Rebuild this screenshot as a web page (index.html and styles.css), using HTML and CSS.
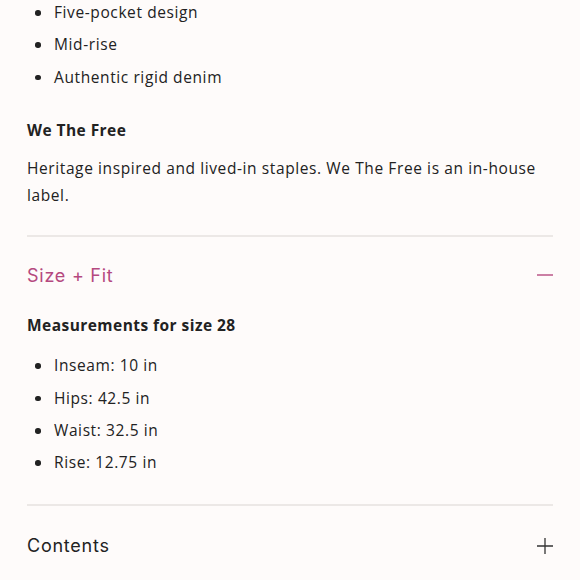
FILE: index.html
```html
<!DOCTYPE html>
<html lang="en">
<head>
<meta charset="utf-8">
<link rel="stylesheet" href="styles.css">
</head>
<body>
<div class="page">
  <section class="panel first">
    <ul class="bullets top">
      <li>Five-pocket design</li>
      <li>Mid-rise</li>
      <li>Authentic rigid denim</li>
    </ul>
    <h3 class="subhead brand">We The Free</h3>
    <p class="para">Heritage inspired and lived-in staples. We The Free is an in-house label.</p>
  </section>
  <section class="panel">
    <div class="acc-head open">
      <span class="acc-title">Size + Fit</span>
      <svg class="acc-icon" width="16" height="16" viewBox="0 0 16 16"><path d="M0 8H16" stroke="#b5497f" stroke-width="1.4"/></svg>
    </div>
    <h3 class="subhead meas">Measurements for size 28</h3>
    <ul class="bullets">
      <li>Inseam: 10 in</li>
      <li>Hips: 42.5 in</li>
      <li>Waist: 32.5 in</li>
      <li>Rise: 12.75 in</li>
    </ul>
  </section>
  <section class="panel">
    <div class="acc-head closed">
      <span class="acc-title">Contents</span>
      <svg class="acc-icon" width="16" height="16" viewBox="0 0 16 16"><path d="M0 8H16M8 0V16" stroke="#333" stroke-width="1.3"/></svg>
    </div>
  </section>
</div>
</body>
</html>
```
FILE: styles.css
```css
html, body {
  margin: 0;
  padding: 0;
  background: #fefbfa;
}
body {
  font-family: "Open Sans", "Liberation Sans", sans-serif;
  color: #222;
  overflow: hidden;
}
.page {
  padding: 0 27px;
}
.panel {
  border-top: 2px solid #ece8e6;
}
.panel.first {
  border-top: none;
  padding-bottom: 26px;
}
.bullets {
  margin: 0;
  padding: 0 0 0 27px;
  list-style: none;
}
.bullets li {
  position: relative;
  font-size: 15.5px;
  line-height: 32.4px;
  letter-spacing: 0.6px;
}
.bullets li::before {
  content: "";
  position: absolute;
  left: -19px;
  top: 14px;
  width: 5.5px;
  height: 5.5px;
  border-radius: 50%;
  background: #222;
}
.bullets.top {
  margin-top: -4px;
}
.subhead {
  margin: 0;
  font-size: 15.5px;
  font-weight: 700;
  letter-spacing: 0.45px;
  line-height: 20px;
}
.brand {
  margin-top: 27px;
}
.para {
  margin: 15px 0 0;
  font-size: 15.5px;
  line-height: 27px;
  letter-spacing: 0.6px;
}
.acc-head {
  display: flex;
  justify-content: space-between;
  align-items: center;
  height: 76px;
}
.acc-head.closed {
  height: 80px;
}
.acc-title {
  font-family: Inter, "Liberation Sans", sans-serif;
  font-size: 18px;
  letter-spacing: 0.75px;
  color: #222;
}
.acc-head.open .acc-title {
  color: #b5497f;
}
.acc-icon {
  display: block;
}
.meas {
  margin-top: 2px;
}
.panel .meas + .bullets {
  margin-top: 14px;
  padding-bottom: 25px;
}
```
